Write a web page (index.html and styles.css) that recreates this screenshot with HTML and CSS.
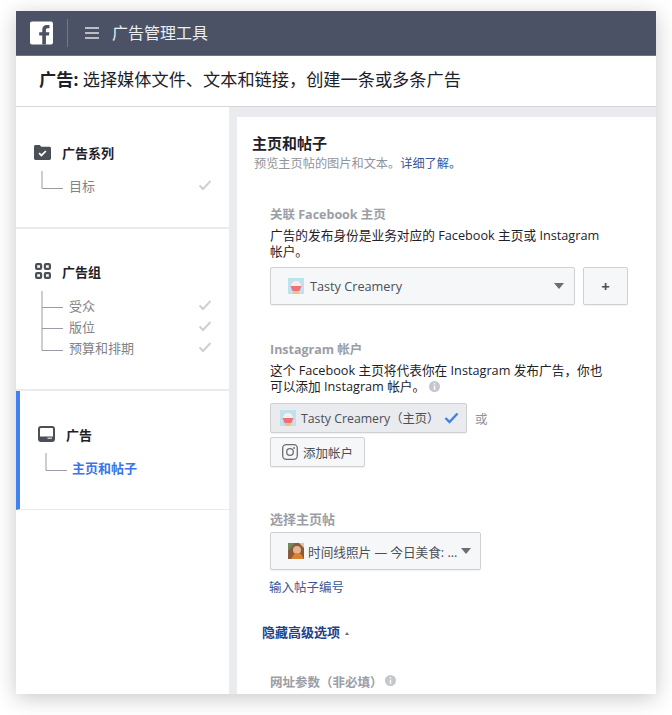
FILE: index.html
```html
<!DOCTYPE html>
<html lang="zh-CN">
<head>
<meta charset="utf-8">
<title>广告管理工具</title>
<link rel="stylesheet" href="styles.css">
</head>
<body>
<div class="window">
  <header class="topbar">
    <svg class="fb" viewBox="0 0 24 24" width="23" height="24"><rect width="24" height="24" rx="2" fill="#fff"/><path d="M16.600 24v-9.300h3.100l.5-3.600h-3.600V8.800c0-1 .3-1.800 1.800-1.800h1.900V3.800c-.3 0-1.500-.1-2.800-.1-2.800 0-4.700 1.700-4.700 4.800v2.600H9.600v3.600h3.200V24z" fill="#4b5265"/></svg>
    <span class="divider"></span>
    <svg class="menu" viewBox="0 0 14 12" width="14" height="12"><path d="M0 1h14M0 6h14M0 11h14" stroke="#dfe1e6" stroke-width="1.300"/></svg>
    <span class="app-title">广告管理工具</span>
  </header>
  <div class="subbar"><b>广告:</b> 选择媒体文件、文本和链接，创建一条或多条广告</div>
  <div class="content">
    <aside class="sidebar">
      <section class="step step-1">
        <div class="step-head">
          <svg viewBox="0 0 16 14" width="17" height="15"><path d="M0 1.500C0 .7.600 0 1.400 0h4l1.500 1.500h7.700c.8 0 1.400.6 1.400 1.400v9.700c0 .8-.6 1.400-1.400 1.400H1.400C.6 14 0 13.400 0 12.600z" fill="#4b4f56"/><path d="M4.800 7.600l2.200 2.200 4.200-4.200" fill="none" stroke="#fff" stroke-width="1.600"/></svg>
          <span>广告系列</span>
        </div>
        <div class="tree">
          <svg class="tree-line" viewBox="0 0 22 18" width="22" height="18"><path d="M1 0v17.500h21" fill="none" stroke="#9a9da3"/></svg>
          <ul class="tree-items"><li>目标<svg class="tick" viewBox="0 0 14 12" width="14" height="12"><path d="M1.500 6.500l3.500 3.500 7.500-8" fill="none" stroke="#ccd0d5" stroke-width="2"/></svg></li></ul>
        </div>
      </section>
      <section class="step step-2">
        <div class="step-head">
          <svg viewBox="0 0 16 16" width="16" height="16"><g fill="none" stroke="#4b4f56" stroke-width="2.200"><rect x="1.100" y="1.100" width="5" height="4.800" rx="1"/><rect x="9.900" y="1.100" width="5" height="4.800" rx="1"/><rect x="1.100" y="10.100" width="5" height="4.800" rx="1"/><rect x="9.900" y="10.100" width="5" height="4.800" rx="1"/></g></svg>
          <span>广告组</span>
        </div>
        <div class="tree">
          <svg class="tree-line" viewBox="0 0 22 60" width="22" height="60"><path d="M1 0v59.500h21M1 16.500h21M1 37.500h21" fill="none" stroke="#9a9da3"/></svg>
          <ul class="tree-items">
            <li>受众<svg class="tick" viewBox="0 0 14 12" width="14" height="12"><path d="M1.500 6.500l3.500 3.500 7.500-8" fill="none" stroke="#ccd0d5" stroke-width="2"/></svg></li>
            <li>版位<svg class="tick" viewBox="0 0 14 12" width="14" height="12"><path d="M1.500 6.500l3.500 3.500 7.500-8" fill="none" stroke="#ccd0d5" stroke-width="2"/></svg></li>
            <li>预算和排期<svg class="tick" viewBox="0 0 14 12" width="14" height="12"><path d="M1.500 6.500l3.500 3.500 7.500-8" fill="none" stroke="#ccd0d5" stroke-width="2"/></svg></li>
          </ul>
        </div>
      </section>
      <section class="step step-3">
        <div class="step-head">
          <svg viewBox="0 0 17 16" width="17" height="16"><rect x="1" y="1" width="15" height="14" rx="2" fill="none" stroke="#4b4f56" stroke-width="2"/><path d="M1 10.500h15V14H1z" fill="#4b4f56"/><path d="M9.500 12.200h4.500" stroke="#fff" stroke-width="1"/></svg>
          <span>广告</span>
        </div>
        <div class="tree">
          <svg class="tree-line" viewBox="0 0 22 18" width="22" height="18"><path d="M1 0v17.500h21" fill="none" stroke="#9a9da3"/></svg>
          <ul class="tree-items"><li class="current">主页和帖子</li></ul>
        </div>
      </section>
    </aside>
    <main class="main">
      <div class="card">
        <h2>主页和帖子</h2>
        <p class="lead">预览主页帖的图片和文本。<a>详细了解。</a></p>
        <div class="form">
          <section class="field field-page">
            <h3>关联 Facebook 主页</h3>
            <p class="help">广告的发布身份是业务对应的 Facebook 主页或 Instagram 帐户。</p>
            <div class="row">
              <div class="btn select">
                <svg class="avatar" viewBox="0 0 16 16" width="16" height="16"><rect width="16" height="16" fill="#bfe3ee"/><path d="M3 8a5 5 0 0 1 10 0z" fill="#f8f0e4"/><path d="M2.500 8h11L11.500 13h-7z" fill="#ef6f7f"/><path d="M5 13h6v3H5z" fill="#f3c46b"/></svg>
                <span class="grow">Tasty Creamery</span>
                <i class="caret"></i>
              </div>
              <div class="btn plus">+</div>
            </div>
          </section>
          <section class="field field-ig">
            <h3>Instagram 帐户</h3>
            <p class="help">这个 Facebook 主页将代表你在 Instagram 发布广告，你也可以添加 Instagram 帐户。<svg class="info" viewBox="0 0 11 11" width="11" height="11"><circle cx="5.500" cy="5.500" r="5.500" fill="#c4c7cc"/><path d="M5.500 2.200v1.300M5.500 4.800v4" stroke="#fff" stroke-width="1.500"/></svg></p>
            <div class="row center">
              <div class="btn chosen">
                <svg class="avatar" viewBox="0 0 16 16" width="16" height="16"><rect width="16" height="16" fill="#bfe3ee"/><path d="M3 8a5 5 0 0 1 10 0z" fill="#f8f0e4"/><path d="M2.500 8h11L11.500 13h-7z" fill="#ef6f7f"/><path d="M5 13h6v3H5z" fill="#f3c46b"/></svg>
                <span class="grow">Tasty Creamery（主页）</span>
                <svg class="check" viewBox="0 0 15 12" width="15" height="12"><path d="M1.500 6l4 4 8-8.500" fill="none" stroke="#4080e8" stroke-width="2.400"/></svg>
              </div>
              <span class="or">或</span>
            </div>
            <div class="btn add">
              <svg viewBox="0 0 16 16" width="16" height="16"><rect x=".7" y=".7" width="14.600" height="14.600" rx="3.500" fill="none" stroke="#6a6e75" stroke-width="1.300"/><circle cx="8" cy="8" r="3.300" fill="none" stroke="#6a6e75" stroke-width="1.300"/><circle cx="12" cy="4" r=".9" fill="#6a6e75"/></svg>
              <span>添加帐户</span>
            </div>
          </section>
          <section class="field field-post">
            <h3 class="plain">选择主页帖</h3>
            <div class="btn post">
              <svg class="avatar" viewBox="0 0 16 16" width="16" height="16"><rect width="16" height="16" fill="#8a5a3c"/><path d="M0 0h7L0 8z" fill="#6d8a57"/><circle cx="9" cy="7" r="4" fill="#e8b38c"/><path d="M3 16l4-6 6 1 3 5z" fill="#d9822f"/><path d="M11 0h5v5z" fill="#d8c9a8"/></svg>
              <span class="grow">时间线照片 — 今日美食: ...</span>
              <i class="caret"></i>
            </div>
            <a class="post-id">输入帖子编号</a>
          </section>
          <a class="advanced">隐藏高级选项 <i class="up"></i></a>
          <section class="field field-url">
            <h3 class="plain url-title">网址参数（非必填）<svg class="info" viewBox="0 0 11 11" width="11" height="11"><circle cx="5.500" cy="5.500" r="5.500" fill="#c4c7cc"/><path d="M5.500 2.200v1.300M5.500 4.800v4" stroke="#fff" stroke-width="1.500"/></svg></h3>
            <div class="url-input"></div>
          </section>
        </div>
      </div>
    </main>
  </div>
</div>
</body>
</html>
```
FILE: styles.css
```css
* { box-sizing: border-box; }
html, body { margin: 0; padding: 0; background: #fff; }
body {
  width: 672px; height: 715px; overflow: hidden; padding: 11px 16px 0;
  font-family: "Open Sans", "Noto Sans CJK SC", sans-serif;
  color: #1d2129;
}
ul, p, h2, h3 { margin: 0; padding: 0; list-style: none; }
.window {
  width: 640px; height: 683px; overflow: hidden; background: #fff;
  display: flex; flex-direction: column;
  box-shadow: 0 4px 20px rgba(0,0,0,.22);
}
.topbar {
  height: 45px; flex: none; background: #4b5265; display: flex; align-items: center;
  padding-left: 14px; border-bottom: 1px solid #6f7585;
}
.fb { flex: none; }
.divider { width: 1px; height: 28px; background: #71788a; margin-left: 14px; }
.menu { margin-left: 17px; }
.app-title { margin-left: 13px; margin-bottom: 3px; font-size: 16px; color: #eceef2; }
.subbar {
  height: 51px; flex: none; display: flex; align-items: center; padding: 0 0 5px 23px; white-space: pre;
  font-size: 17.200px; color: #1d2129; border-bottom: 1px solid #d5d7da;
}
.subbar b { font-weight: 700; }
.content { flex: 1; display: flex; min-height: 0; }
.sidebar { width: 213px; flex: none; background: #fff; }
.step { border-bottom: 2px solid #e9ebee; padding-left: 18px; padding-right: 17px; }
.step-1 { height: 122px; padding-top: 36px; }
.step-2 { height: 162px; padding-top: 33px; }
.step-3 { height: 119px; padding-top: 34px; border-left: 4px solid #4080f0; border-bottom-width: 1px; }
.step-head { display: flex; align-items: center; gap: 11px; font-size: 13px; font-weight: 700; color: #1d2129; height: 18px; }
.step-2 .step-head { gap: 11px; padding-left: 1px; }
.tree { display: flex; margin: 10px 0 0 7px; }
.step-2 .tree { margin-top: 11px; }
.tree-line { flex: none; }
.tree-items { flex: 1; font-size: 13px; color: #7f8389; margin-left: 6px; padding-top: 3.500px; }
.step-3 .tree-items { margin-left: 5px; }
.tree-items li { display: flex; justify-content: space-between; align-items: center; height: 21px; }
.tree-items .current { color: #3b74e6; font-weight: 700; }
.main { flex: 1; background: #e9ebee; padding: 10px 0 0 8px; min-width: 0; }
.card { background: #fff; height: 100%; padding: 17px 0 0 15px; overflow: hidden; }
h2 { font-size: 15px; line-height: 18px; font-weight: 700; color: #1d2129; }
.lead { font-size: 12.200px; line-height: 16px; margin-top: 4px; padding-left: 2px; color: #90949c; white-space: nowrap; }
.lead a, .post-id { color: #365899; }
.form { padding: 0 28px 0 18px; }
.field h3 { font-size: 12.500px; line-height: 18px; font-weight: 700; color: #9a9ea5; }
.field h3.plain { font-size: 13px; }
.field h3.url-title { font-size: 12.500px; }
.help { font-size: 12.700px; line-height: 15.500px; color: #1d2129; margin-top: 4px; max-width: 335px; }
.field-page { padding-top: 34px; }
.field-ig { padding-top: 36px; }
.field-post { padding-top: 43px; }
.field-url { padding-top: 34px; }
.row { display: flex; gap: 8px; margin-top: 8px; }
.row.center { align-items: center; margin-top: 9px; }
.btn {
  display: flex; align-items: center; background: #f6f7f9; border: 1px solid #ced0d4; border-radius: 2px;
  font-size: 12.700px; color: #4b4f56; box-shadow: 0 1px 1px rgba(0,0,0,.06);
}
.grow { flex: 1; white-space: nowrap; }
.avatar { flex: none; }
.select { width: 305px; height: 38px; padding: 0 10px 0 17px; gap: 6px; }
.plus { width: 45px; height: 38px; justify-content: center; font-size: 15px; font-weight: 700; }
.caret { width: 0; height: 0; border: 5px solid transparent; border-top: 6px solid #6a6e75; border-bottom: 0; flex: none; }
.chosen { width: 197px; height: 30px; padding: 0 10px 0 9px; gap: 5px; background: #e9ebee; white-space: nowrap; font-size: 12.300px; }
.check { flex: none; }
.or { font-size: 12.500px; color: #90949c; }
.add { width: 95px; height: 30px; margin-top: 4px; padding-left: 11px; gap: 5px; font-size: 12.500px; }
.post { width: 211px; height: 38px; margin-top: 4px; padding: 0 9px 0 17px; gap: 4px; white-space: nowrap; }
.post .grow { letter-spacing: -.05px; }
.post-id { display: block; font-size: 12.500px; line-height: 16px; margin: 10px 0 0 -1px; }
.advanced { display: block; font-size: 13px; line-height: 16px; font-weight: 700; color: #23408c; margin: 28px 0 0 -8px; }
.up { display: inline-block; width: 0; height: 0; border: 2.500px solid transparent; border-bottom: 3px solid #6a6e75; border-top: 0; margin-left: 2px; vertical-align: 2px; }
.info { margin-left: 4px; vertical-align: -1px; }
.url-title .info { margin-left: 2px; vertical-align: 1px; }
.url-input { height: 30px; margin-top: 3px; border: 1px solid #dddfe2; }
```
